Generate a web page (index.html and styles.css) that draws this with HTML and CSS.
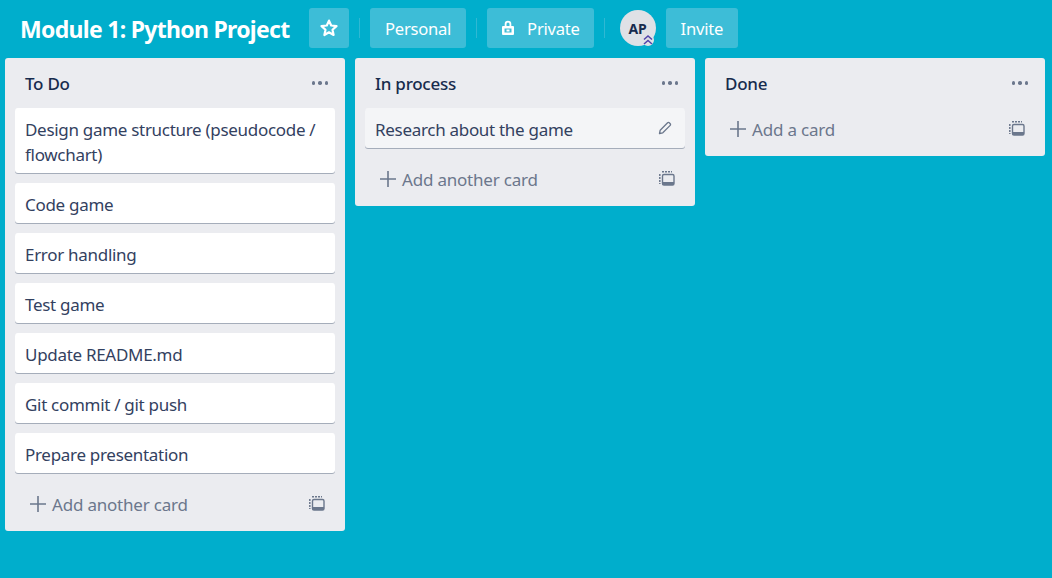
FILE: index.html
```html
<!DOCTYPE html>
<html lang="en">

<head>
    <meta charset="UTF-8">
    <meta name="viewport" content="width=device-width, initial-scale=1.0">
    <title>Module 1: Python Project</title>
    <link rel="stylesheet" href="styles.css">
</head>

<body>

    <header class="board-header">
        <h1 class="board-title">Module 1: Python Project</h1>
        <button class="header-btn star-btn" aria-label="Star">
            <svg width="20" height="20" viewBox="0 0 20 20"><path d="M10 2.6l2.2 4.9 5.3.6-4 3.6 1.1 5.3L10 14.3l-4.6 2.7 1.1-5.3-4-3.6 5.3-.6z" fill="none" stroke="#fff" stroke-width="2.2" stroke-linejoin="round"/></svg>
        </button>
        <span class="divider"></span>
        <button class="header-btn">Personal</button>
        <span class="divider"></span>
        <button class="header-btn private-btn">
            <svg width="14" height="16" viewBox="0 0 14 16"><path d="M4.6 7V4a2.4 2.4 0 0 1 4.800 0V7" fill="none" stroke="#fff" stroke-width="1.800"/><path fill-rule="evenodd" d="M2 6h10a1 1 0 0 1 1 1v7a1 1 0 0 1-1 1H2a1 1 0 0 1-1-1V7a1 1 0 0 1 1-1zm1.500 2.500v4h7v-4z" fill="#fff"/><rect x="5.500" y="9.500" width="3" height="2" fill="#fff"/></svg>
            Private
        </button>
        <span class="divider"></span>
        <div class="avatar">AP
            <span class="avatar-badge">
                <svg width="12" height="12" viewBox="0 0 12 12"><path d="M2 5.500L6 2l4 3.500M2 10L6 6.500l4 3.500" fill="none" stroke="#5243aa" stroke-width="1.500"/></svg>
            </span>
        </div>
        <button class="header-btn">Invite</button>
    </header>

    <main class="board">
        <section class="list">
            <div class="list-head">
                <h2>To Do</h2>
                <span class="list-menu"><i></i><i></i><i></i></span>
            </div>
            <div class="card">Design game structure (pseudocode / flowchart)</div>
            <div class="card">Code game</div>
            <div class="card">Error handling</div>
            <div class="card">Test game</div>
            <div class="card">Update README.md</div>
            <div class="card">Git commit / git push</div>
            <div class="card">Prepare presentation</div>
            <div class="add-row">
                <svg width="16" height="16" viewBox="0 0 16 16"><path d="M8 0v16M0 8h16" stroke="#6b778c" stroke-width="1.600"/></svg>
                <span class="add-text">Add another card</span>
                <svg width="16" height="16" viewBox="0 0 16 16"><path d="M3 .8h10M.8 3v10" fill="none" stroke="#6b778c" stroke-width="1.500" stroke-dasharray="2 1"/><rect x="3.500" y="3.500" width="11.500" height="10.500" rx="1.500" fill="none" stroke="#6b778c" stroke-width="1.400"/><rect x="3.500" y="11" width="11.500" height="3" fill="#6b778c"/></svg>
            </div>
        </section>

        <section class="list">
            <div class="list-head">
                <h2>In process</h2>
                <span class="list-menu"><i></i><i></i><i></i></span>
            </div>
            <div class="card card-hover">Research about the game
                <svg class="edit" width="14" height="14" viewBox="0 0 14 14"><path d="M1.500 12.500l.7-3.300L9.600 1.800a1.200 1.200 0 0 1 1.700 0l.9.9a1.200 1.200 0 0 1 0 1.700l-7.400 7.400z" fill="none" stroke="#6b778c" stroke-width="1.300" stroke-linejoin="round"/></svg>
            </div>
            <div class="add-row">
                <svg width="16" height="16" viewBox="0 0 16 16"><path d="M8 0v16M0 8h16" stroke="#6b778c" stroke-width="1.600"/></svg>
                <span class="add-text">Add another card</span>
                <svg width="16" height="16" viewBox="0 0 16 16"><path d="M3 .8h10M.8 3v10" fill="none" stroke="#6b778c" stroke-width="1.500" stroke-dasharray="2 1"/><rect x="3.500" y="3.500" width="11.500" height="10.500" rx="1.500" fill="none" stroke="#6b778c" stroke-width="1.400"/><rect x="3.500" y="11" width="11.500" height="3" fill="#6b778c"/></svg>
            </div>
        </section>

        <section class="list">
            <div class="list-head">
                <h2>Done</h2>
                <span class="list-menu"><i></i><i></i><i></i></span>
            </div>
            <div class="add-row">
                <svg width="16" height="16" viewBox="0 0 16 16"><path d="M8 0v16M0 8h16" stroke="#6b778c" stroke-width="1.600"/></svg>
                <span class="add-text">Add a card</span>
                <svg width="16" height="16" viewBox="0 0 16 16"><path d="M3 .8h10M.8 3v10" fill="none" stroke="#6b778c" stroke-width="1.500" stroke-dasharray="2 1"/><rect x="3.500" y="3.500" width="11.500" height="10.500" rx="1.500" fill="none" stroke="#6b778c" stroke-width="1.400"/><rect x="3.500" y="11" width="11.500" height="3" fill="#6b778c"/></svg>
            </div>
        </section>
    </main>

</body>

</html>
```

FILE: styles.css
```css
body {
    font-family: "Noto Sans", "Open Sans", sans-serif;
    margin: 0;
    padding: 0;
    height: 578px;
    overflow: hidden;
    color: #172b4d;
    background-color: #00aecc;
}

.board-header {
    display: flex;
    align-items: center;
    height: 40px;
    padding: 8px 0 10px 20px;
}

.board-title {
    margin: 2px 20px 0 0;
    width: 269px;
    font-size: 23px;
    font-weight: 700;
    letter-spacing: -0.7px;
    line-height: 40px;
    color: #fff;
    white-space: nowrap;
}

.header-btn {
    display: flex;
    align-items: center;
    justify-content: center;
    height: 40px;
    padding: 0 15px;
    border: none;
    border-radius: 3px;
    background: #3dbdd7;
    color: #fff;
    font-family: inherit;
    font-size: 16.6px;
    letter-spacing: -0.25px;
}

.star-btn {
    width: 40px;
    padding: 0;
}

.private-btn {
    gap: 12px;
    padding: 0 14px;
}

.divider {
    width: 1px;
    height: 20px;
    margin: 0 10px;
    background: #2fb8d3;
}

.avatar {
    position: relative;
    display: flex;
    align-items: center;
    justify-content: center;
    width: 36px;
    height: 36px;
    margin: 0 10px 0 5px;
    border-radius: 50%;
    background: #dfe1e6;
    color: #172b4d;
    font-size: 14px;
    font-weight: 700;
}

.avatar-badge {
    position: absolute;
    right: 2px;
    bottom: 0;
    display: flex;
    width: 12px;
    height: 12px;
    border-radius: 50%;
    background: #dfe1e6;
}

.board {
    display: flex;
    align-items: flex-start;
    gap: 10px;
    padding-left: 5px;
}

.list {
    width: 320px;
    padding: 0 10px;
    background: #ebecf0;
    border-radius: 3px;
}

.list-head {
    display: flex;
    align-items: center;
    justify-content: space-between;
    height: 50px;
    padding: 0 7px 0 10px;
}

.list-head h2 {
    margin: 0;
    font-size: 17px;
    font-weight: 500;
    letter-spacing: -0.25px;
    color: #172b4d;
}

.list-menu {
    display: flex;
    gap: 3px;
}

.list-menu i {
    width: 3.5px;
    height: 3.5px;
    border-radius: 50%;
    background: #6b778c;
}

.card {
    position: relative;
    width: 300px;
    padding: 9px 10px 6px;
    margin-bottom: 10px;
    background: #fff;
    border-radius: 3px;
    box-shadow: 0 1px 0 #a5adba;
    color: #33415f;
    font-size: 17px;
    letter-spacing: -0.3px;
    line-height: 25px;
}

.card-hover {
    background: #f4f5f7;
}

.edit {
    position: absolute;
    top: 13px;
    right: 13px;
}

.add-row {
    display: flex;
    align-items: center;
    height: 48px;
    margin-top: -3px;
    padding: 0 10px 3px 15px;
    color: #6b778c;
    font-size: 17px;
    letter-spacing: -0.2px;
}

.add-text {
    margin-left: 6px;
    flex: 1;
}
```
